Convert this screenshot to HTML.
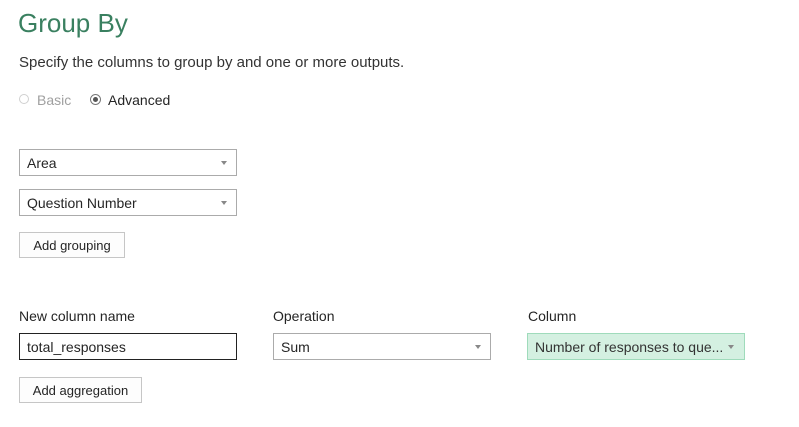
<!DOCTYPE html>
<html><head><style>
body{margin:0;width:799px;height:427px;background:#fff;font-family:"Segoe UI","Liberation Sans",sans-serif;color:#252525;position:relative;overflow:hidden}
.a{position:absolute;white-space:nowrap}
.box{position:absolute;box-sizing:border-box;height:27px;border:1px solid #ababab;font-size:14px;line-height:26px;padding-left:7px;background:#fff}
.arr{position:absolute;right:9px;top:11px;width:0;height:0;border-left:3px solid transparent;border-right:3px solid transparent;border-top:4px solid #888}
.btn{position:absolute;box-sizing:border-box;height:26px;border:1px solid #c6c6c6;background:#fdfdfd;font-size:13px;line-height:25px;text-align:center}
.lbl{font-size:14px;top:308px}
</style></head><body>
<div class="a" style="left:18px;top:8px;font-size:26px;color:#3a8060">Group By</div>
<div class="a" style="left:19px;top:54px;font-size:15px;color:#333">Specify the columns to group by and one or more outputs.</div>
<div class="a" style="left:19px;top:94px;width:10px;height:10px;border:1px solid #d0d0d0;border-radius:50%;box-sizing:border-box"></div>
<div class="a" style="left:37px;top:92px;font-size:14px;color:#a0a0a0">Basic</div>
<div class="a" style="left:90px;top:94px;width:11px;height:11px;border:1px solid #777;border-radius:50%;box-sizing:border-box"><div style="margin:2px;width:5px;height:5px;border-radius:50%;background:#555"></div></div>
<div class="a" style="left:108px;top:92px;font-size:14px;color:#252525">Advanced</div>
<div class="box" style="left:19px;top:149px;width:218px">Area<div class="arr"></div></div>
<div class="box" style="left:19px;top:189px;width:218px">Question Number<div class="arr"></div></div>
<div class="btn" style="left:19px;top:232px;width:106px">Add grouping</div>
<div class="a lbl" style="left:19px">New column name</div>
<div class="a lbl" style="left:273px">Operation</div>
<div class="a lbl" style="left:528px">Column</div>
<div class="box" style="left:19px;top:333px;width:218px;border-color:#222">total_responses</div>
<div class="box" style="left:273px;top:333px;width:218px">Sum<div class="arr"></div></div>
<div class="box" style="left:527px;top:333px;width:218px;background:#d4f0e1;border-color:#9fdbbb;color:#333">Number of responses to que...<div class="arr" style="right:10px"></div></div>
<div class="btn" style="left:19px;top:377px;width:123px">Add aggregation</div>
</body></html>
